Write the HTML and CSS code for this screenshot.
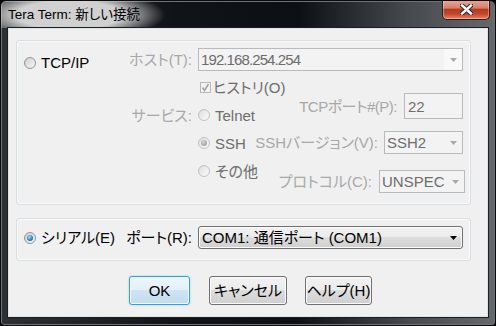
FILE: index.html
```html
<!DOCTYPE html>
<html>
<head>
  <meta charset="utf-8">
  <title>Tera Term: 新しい接続</title>
  <link rel="stylesheet" href="styles.css">
</head>
<body>
  <div class="window">
    <div class="titlebar">
      <span class="title">Tera Term: 新しい接続</span>
      <span class="close-btn">
        <svg width="13" height="11" viewBox="0 0 13 11">
          <path d="M2 1.5 L11 9.5 M11 1.5 L2 9.5" stroke="#2e3236" stroke-width="4.6" stroke-linecap="square"/>
          <path d="M2 1.5 L11 9.5 M11 1.5 L2 9.5" stroke="#ffffff" stroke-width="2.4" stroke-linecap="square"/>
        </svg>
      </span>
    </div>
    <div class="client">
      <div class="group tcp-group">
        <label class="opt tcp-opt"><span class="radio enabled"></span>TCP/IP</label>
        <span class="lbl">ホスト(T):</span>
        <div class="combo host-combo">
          <span class="host-text">192.168.254.254</span>
          <span class="arrow-box"><svg width="7" height="4" viewBox="0 0 7 4"><polygon points="0,0 7,0 3.5,4" fill="#a9a9a9"/></svg></span>
        </div>
        <span class="lbl service-lbl">サービス:</span>
        <div class="service-area">
          <div class="opt-list">
            <label class="opt dim check-opt">
              <span class="check"><svg width="9" height="9" viewBox="0 0 9 9"><path d="M1.5 4.5 L3.5 7.5 L7.5 1" fill="none" stroke="#a6a6a6" stroke-width="1.6"/></svg></span>ヒストリ(O)
            </label>
            <label class="opt dim"><span class="radio"></span>Telnet</label>
            <label class="opt dim"><span class="radio on"></span>SSH</label>
            <label class="opt dim"><span class="radio"></span>その他</label>
          </div>
          <div class="field-list">
            <div class="field-row port-row">
              <span class="lbl">TCPポート#(P):</span>
              <span class="edit">22</span>
            </div>
            <div class="field-row version-row">
              <span class="lbl">SSHバージョン(V):</span>
              <div class="combo version-combo">
                <span>SSH2</span>
                <span class="arrow-box"><svg width="7" height="4" viewBox="0 0 7 4"><polygon points="0,0 7,0 3.5,4" fill="#a9a9a9"/></svg></span>
              </div>
            </div>
            <div class="field-row proto-row">
              <span class="lbl">プロトコル(C):</span>
              <div class="combo proto-combo">
                <span>UNSPEC</span>
                <span class="arrow-box"><svg width="7" height="4" viewBox="0 0 7 4"><polygon points="0,0 7,0 3.5,4" fill="#a9a9a9"/></svg></span>
              </div>
            </div>
          </div>
        </div>
      </div>

      <div class="group serial-group">
        <label class="opt"><span class="radio enabled on blue"></span>シリアル(E)</label>
        <span class="lbl active">ポート(R):</span>
        <div class="combo com-combo">
          <span>COM1: 通信ポート (COM1)</span>
          <span class="arrow-box"><svg width="7" height="4" viewBox="0 0 7 4"><polygon points="0,0 7,0 3.5,4" fill="#000"/></svg></span>
        </div>
      </div>

      <div class="buttons">
        <span class="btn ok">OK</span>
        <span class="btn cancel">キャンセル</span>
        <span class="btn help">ヘルプ(H)</span>
      </div>
    </div>
  </div>
</body>
</html>
```

FILE: styles.css
```css
body {
  margin: 0;
  font-family: "Liberation Sans", "Noto Sans CJK JP", sans-serif;
  font-size: 15px;
  line-height: 17px;
  font-feature-settings: "palt";
  color: #000;
  background: #000;
}

.window {
  width: 496px;
  height: 326px;
  box-sizing: border-box;
  border: 1px solid #0a0a0a;
  border-radius: 6px 6px 4px 4px;
  background: linear-gradient(90deg, #2e3134 0, #101418 35%, #0c1014 60%, #45494d 82%, #66696c 100%);
  box-shadow: inset 0 0 0 1px #6e7276;
  display: flex;
  flex-direction: column;
  overflow: hidden;
}

.titlebar {
  height: 27px;
  flex: none;
  display: flex;
  justify-content: space-between;
  align-items: flex-start;
  padding-left: 7px;
  background: radial-gradient(ellipse 96px 26px at 68px 14px, rgba(214, 214, 214, 0.97) 55%, rgba(214, 214, 214, 0) 100%);
}

.title {
  font-size: 13.5px;
  line-height: 27px;
  color: #000;
}

.close-btn {
  width: 48px;
  height: 20px;
  margin: -1px 5px 0 0;
  box-sizing: border-box;
  border: 1px solid #3a1810;
  border-top: none;
  border-radius: 0 0 5px 5px;
  background: linear-gradient(#e6ab9b 0, #d6806b 42%, #b73a1e 50%, #c4442a 72%, #e08563 100%);
  box-shadow: inset 0 0 0 1px rgba(255, 255, 255, 0.35);
  display: flex;
  align-items: center;
  justify-content: center;
}

.client {
  flex: 1;
  margin: 0 7px 8px;
  padding: 11px 0 0 7px;
  background: #f0f0f0;
  border: 1px solid #dfe3e6;
  box-shadow: 0 0 0 1px #1c1f22;
}

/* group boxes */
.group {
  width: 455px;
  box-sizing: border-box;
  border: 1px solid #d5dfe5;
  border-radius: 3px;
  box-shadow: inset 0 0 0 1px #fafafa;
  display: grid;
  grid-template-columns: 100px 74px 265px;
  padding: 7px 0 0 7px;
}

.tcp-group {
  height: 165px;
  grid-template-rows: 23px auto;
}

.serial-group {
  height: 43px;
  margin-top: 13px;
  grid-template-rows: 23px;
  align-items: center;
}

.opt {
  display: flex;
  align-items: center;
  gap: 5px;
  white-space: nowrap;
}

.tcp-opt {
  align-self: start;
  margin-top: 6px;
}

.dim {
  color: #6d6d6d;
}

.lbl {
  justify-self: end;
  align-self: center;
  padding-right: 6px;
  color: #a8a8a8;
  white-space: nowrap;
}

.lbl.active {
  color: #000;
}

.service-lbl {
  grid-column: 2;
  align-self: start;
  margin-top: 36px;
}

.service-area {
  grid-column: 3;
  display: grid;
}

.service-area > div {
  grid-area: 1 / 1;
}

.opt-list {
  justify-self: start;
  margin-top: 2px;
}

.opt-list .opt {
  height: 28px;
}

.check-opt {
  gap: 2px;
  padding-left: 2px;
}

.field-list {
  justify-self: end;
  margin-top: 22px;
  display: flex;
  flex-direction: column;
  align-items: flex-end;
}

.field-row {
  display: flex;
  align-items: center;
}

.field-row .lbl {
  padding-right: 7px;
}

.port-row .lbl {
  letter-spacing: -0.5px;
}

.version-row {
  margin-top: 12px;
}

.version-row .lbl {
  padding-right: 6px;
}

.proto-row {
  margin-top: 16px;
  margin-right: -2px;
}

/* radios and checkbox */
.radio {
  width: 12px;
  height: 12px;
  flex: none;
  box-sizing: border-box;
  border-radius: 50%;
  border: 1px solid #c2c2c2;
  background: linear-gradient(135deg, #dedede, #fafafa);
  display: flex;
  align-items: center;
  justify-content: center;
}

.radio.enabled {
  border-color: #939393;
  background: linear-gradient(135deg, #cfcfcf, #f7f7f7);
}

.radio.on::after {
  content: "";
  width: 6px;
  height: 6px;
  border-radius: 50%;
  background: radial-gradient(circle at 40% 35%, #d4d4d4, #8f8f8f);
}

.radio.blue::after {
  background: radial-gradient(circle at 40% 35%, #9be6ff, #1f7ec0 60%, #0c4678);
}

.check {
  width: 11px;
  height: 11px;
  box-sizing: border-box;
  border: 1px solid #b8b8b8;
  background: #f3f3f3;
  display: flex;
  align-items: center;
  justify-content: center;
}

/* fields */
.combo,
.edit {
  box-sizing: border-box;
  height: 23px;
  border: 1px solid #b7bbbe;
  background: #f3f3f3;
  color: #6d6d6d;
  display: flex;
  align-items: center;
  justify-content: space-between;
  padding-left: 2px;
  white-space: nowrap;
}

.host-text {
  letter-spacing: -0.9px;
}

.arrow-box {
  width: 18px;
  align-self: stretch;
  display: flex;
  align-items: center;
  justify-content: center;
  background: #f9f9f9;
}

.edit {
  width: 59px;
  height: 26px;
  padding-left: 3px;
}

.version-combo {
  width: 79px;
}

.proto-combo {
  width: 86px;
}

.proto-combo .arrow-box,
.version-combo .arrow-box {
  background: none;
}

.com-combo {
  border: 1px solid #707070;
  border-radius: 3px;
  color: #000;
  padding-left: 3px;
  background: linear-gradient(#f2f2f2 0, #ebebeb 50%, #dddddd 50%, #cfcfcf 100%);
  box-shadow: inset 0 0 0 1px #fbfbfb;
}

.com-combo .arrow-box {
  background: none;
}

/* buttons */
.buttons {
  display: flex;
  margin-top: 15px;
  padding-left: 113px;
}

.btn {
  height: 29px;
  box-sizing: border-box;
  border: 1px solid #707070;
  border-radius: 3px;
  background: linear-gradient(#f2f2f2 0, #ebebeb 50%, #dddddd 50%, #cfcfcf 100%);
  box-shadow: inset 0 0 0 1px #fbfbfb;
  display: flex;
  align-items: center;
  justify-content: center;
  white-space: nowrap;
}

.ok {
  width: 61px;
  border-color: #3a9ed6;
  background: linear-gradient(#eef6fc 0, #e2eff9 50%, #cfe4f3 50%, #c3dcee 100%);
  box-shadow: inset 0 0 0 1px #f4fbff, 0 0 2px #6fd0ff;
}

.cancel {
  width: 78px;
  margin-left: 19px;
}

.help {
  width: 67px;
  margin-left: 18px;
}
```
